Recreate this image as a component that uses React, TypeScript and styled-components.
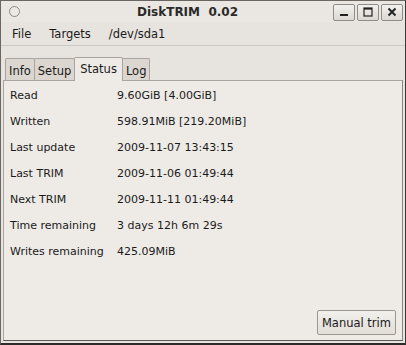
import React from 'react';
import styled, { createGlobalStyle } from 'styled-components';

const Global = createGlobalStyle`
  html, body {
    margin: 0;
    padding: 0;
    background: #e6e2dd;
  }
  body {
    font-family: 'DejaVu Sans', sans-serif;
    font-size: 11px;
    color: #1a1a1a;
  }
`;

const Window = styled.div`
  width: 406px;
  height: 345px;
  box-sizing: border-box;
  border: 1px solid #6a6763;
  border-right-color: #3a3836;
  border-bottom: 2px solid #2e2c2a;
  background: #e7e3de;
  display: flex;
  flex-direction: column;
`;

const TitleBar = styled.div`
  height: 21px;
  display: flex;
  align-items: center;
  padding: 0 2px 0 8px;
  background: #eae7e2;
`;

const WinIcon = styled.div`
  width: 9px;
  height: 9px;
  border-radius: 50%;
  border: 1px solid #8a8784;
  background: #ece9e5;
`;

const Title = styled.div`
  flex: 1;
  text-align: center;
  font-weight: bold;
  font-size: 12px;
  padding-left: 22px;
  white-space: pre;
  color: #2a2a2a;
`;

const WinButtons = styled.div`
  display: flex;
  gap: 2px;
  margin-top: 1px;
`;

const WinButton = styled.div`
  width: 22px;
  height: 17px;
  box-sizing: border-box;
  border: 1px solid #8f8c88;
  border-radius: 2px;
  background: linear-gradient(#f3f1ee, #dcd8d3);
  display: flex;
  align-items: center;
  justify-content: center;
`;

const MenuBar = styled.div`
  height: 23px;
  display: flex;
  align-items: center;
  padding: 0 0 0 2px;
  border-bottom: 1px solid #cdc8c2;
  font-size: 11.5px;
`;

const MenuItem = styled.span`
  padding: 0 9px;
  color: #1a1a1a;
`;

const Body = styled.div`
  flex: 1;
  display: flex;
  flex-direction: column;
  padding: 10px 2px 2px 2px;
`;

const Tabs = styled.div`
  display: flex;
  align-items: flex-end;
  padding-left: 2px;
  height: 24px;
`;

const Tab = styled.div<{ $active?: boolean }>`
  height: ${(p) => (p.$active ? 24 : 22)}px;
  box-sizing: border-box;
  padding: ${(p) => (p.$active ? '4px 5px 0' : '5px 3px 0')};
  font-size: 11.5px;
  border: 1px solid #a9a49e;
  border-bottom: none;
  border-radius: 2px 2px 0 0;
  background: ${(p) => (p.$active ? '#eeebe7' : '#dbd6d0')};
  color: #1a1a1a;
  margin-right: -1px;
  position: relative;
  z-index: ${(p) => (p.$active ? 1 : 0)};
  margin-bottom: ${(p) => (p.$active ? '-1px' : '0')};
`;

const Panel = styled.div`
  flex: 1;
  background: #eeebe7;
  border: 1px solid #a9a49e;
  border-bottom-color: #5c5955;
  border-right-color: #8a8680;
  display: flex;
  flex-direction: column;
  padding: 8px 6px 5px 6px;
`;

const Rows = styled.div`
  display: grid;
  grid-template-columns: 107px 1fr;
  row-gap: 13px;
  font-size: 11px;
  line-height: 13px;
`;

const Label = styled.div`
  color: #1a1a1a;
`;

const Value = styled.div`
  color: #1a1a1a;
`;

const Footer = styled.div`
  margin-top: auto;
  display: flex;
  justify-content: flex-end;
`;

const Button = styled.button`
  font-family: 'DejaVu Sans', sans-serif;
  font-size: 11.5px;
  color: #1a1a1a;
  height: 25px;
  padding: 0 4px;
  border: 1px solid #9b968f;
  border-radius: 2px;
  background: linear-gradient(#f2f0ec, #e2ded8);
`;

const rows: [string, string][] = [
  ['Read', '9.60GiB [4.00GiB]'],
  ['Written', '598.91MiB [219.20MiB]'],
  ['Last update', '2009-11-07 13:43:15'],
  ['Last TRIM', '2009-11-06 01:49:44'],
  ['Next TRIM', '2009-11-11 01:49:44'],
  ['Time remaining', '3 days 12h 6m 29s'],
  ['Writes remaining', '425.09MiB'],
];

const App = () => {
  return (
    <>
      <Global />
      <Window>
        <TitleBar>
          <WinIcon />
          <Title>{'DiskTRIM  0.02'}</Title>
          <WinButtons>
            <WinButton>
              <svg width="10" height="10" viewBox="0 0 10 10">
                <rect x="1" y="7" width="8" height="2" fill="#222" />
              </svg>
            </WinButton>
            <WinButton>
              <svg width="10" height="10" viewBox="0 0 10 10">
                <rect x="1" y="1" width="8" height="8" fill="none" stroke="#222" strokeWidth="1.2" />
                <rect x="1" y="1" width="8" height="1.6" fill="#222" />
              </svg>
            </WinButton>
            <WinButton>
              <svg width="10" height="10" viewBox="0 0 10 10">
                <path d="M1.5 1.5 L8.5 8.5 M8.5 1.5 L1.5 8.5" stroke="#222" strokeWidth="2" />
              </svg>
            </WinButton>
          </WinButtons>
        </TitleBar>
        <MenuBar>
          <MenuItem>File</MenuItem>
          <MenuItem>Targets</MenuItem>
          <MenuItem>/dev/sda1</MenuItem>
        </MenuBar>
        <Body>
          <Tabs>
            <Tab>Info</Tab>
            <Tab>Setup</Tab>
            <Tab $active>Status</Tab>
            <Tab>Log</Tab>
          </Tabs>
          <Panel>
            <Rows>
              {rows.map(([k, v]) => (
                <React.Fragment key={k}>
                  <Label>{k}</Label>
                  <Value>{v}</Value>
                </React.Fragment>
              ))}
            </Rows>
            <Footer>
              <Button>Manual trim</Button>
            </Footer>
          </Panel>
        </Body>
      </Window>
    </>
  );
};

export default App;
